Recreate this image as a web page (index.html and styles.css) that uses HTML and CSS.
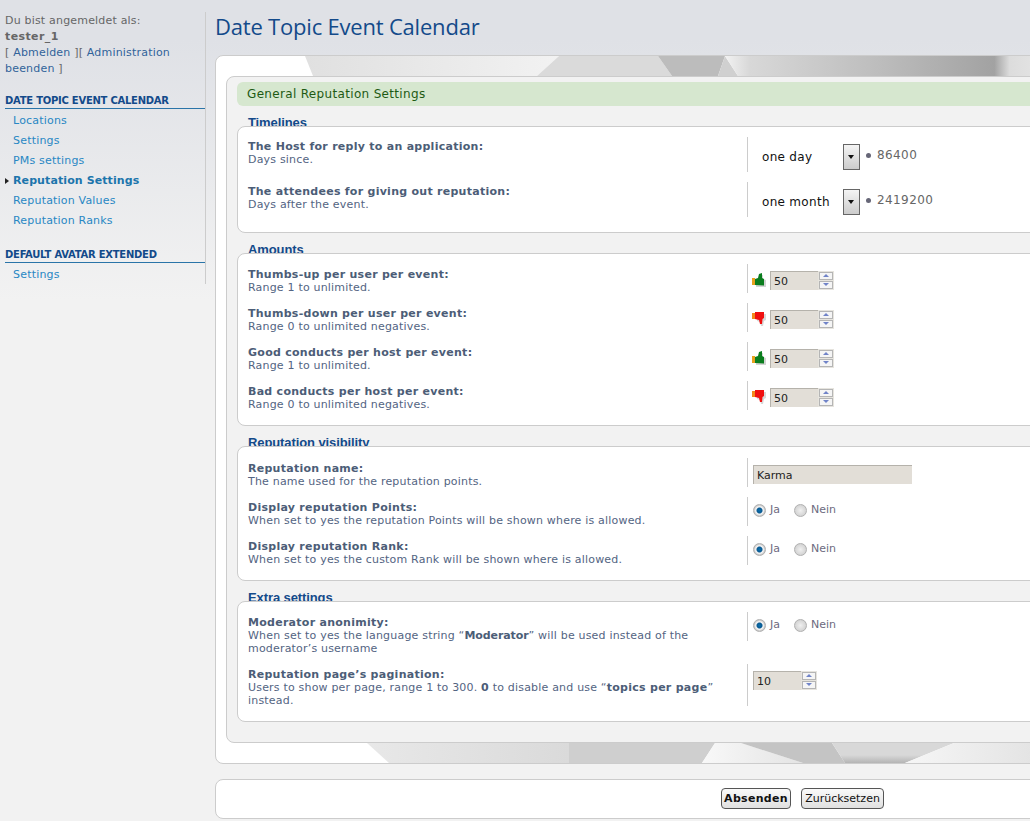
FILE: index.html
```html
<!DOCTYPE html>
<html lang="de">

<head>
    <meta charset="UTF-8">
    <title>Date Topic Event Calendar</title>
    <link rel="stylesheet" href="styles.css">
</head>

<body>
    <svg class="defs" width="0" height="0">
        <defs>
            <g id="thumb-up">
                <path d="M4 7 L7 6 L9 2 L11 2 L11 6 L14 7 L14 14 L4 14 Z" fill="#d4d4d4"/>
                <rect x="0" y="5" width="3" height="7" fill="#e6a21e"/>
                <path d="M3 6 L6 5 L7 1 L10 0 L10 5 L12 6 L12 12.500 L3 12 Z" fill="#0a7d1e"/>
            </g>
            <g id="thumb-down">
                <path d="M5 2 L14 2 L14 8 L12 9 L11 14 L9 14 L8 10 L5 9 Z" fill="#d8d8d8"/>
                <rect x="0" y="1" width="4" height="6" fill="#f28a1c"/>
                <path d="M3 0 L12 0 L12 6 L10.500 7 L10 12 L8 12 L7 8 L3 7 Z" fill="#f01010"/>
            </g>
            <linearGradient id="t1"><stop offset="0" stop-color="#e0e0e0"/><stop offset="1" stop-color="#f2f2f2"/></linearGradient>
            <linearGradient id="t4">
                <stop offset="0" stop-color="#f2f2f2"/>
                <stop offset="0.08" stop-color="#d8d8d8"/>
                <stop offset="0.5" stop-color="#bdbdbd"/>
                <stop offset="0.88" stop-color="#a2a2a2"/>
                <stop offset="0.93" stop-color="#dcdcdc"/>
                <stop offset="1" stop-color="#e2e2e2"/>
            </linearGradient>
            <linearGradient id="b1"><stop offset="0" stop-color="#e8e8e8"/><stop offset="1" stop-color="#dadada"/></linearGradient>
            <linearGradient id="b3"><stop offset="0" stop-color="#f8f8f8"/><stop offset="1" stop-color="#e4e4e4"/></linearGradient>
            <linearGradient id="b6"><stop offset="0" stop-color="#f6f6f6"/><stop offset="1" stop-color="#e4e4e4"/></linearGradient>
            <linearGradient id="b5" x1="0" y1="0" x2="0" y2="1"><stop offset="0.6" stop-color="#d8d8d8"/><stop offset="1" stop-color="#b4b4b4"/></linearGradient>
        </defs>
    </svg>

    <aside class="sidebar">
        <p class="login">Du bist angemeldet als:<br><b>tester_1</b><br>[ <a href="#">Abmelden</a> ][ <a href="#">Administration beenden</a> ]</p>
        <h3 class="menu-head">Date Topic Event Calendar</h3>
        <ul class="menu">
            <li>Locations</li>
            <li>Settings</li>
            <li>PMs settings</li>
            <li class="active">Reputation Settings</li>
            <li>Reputation Values</li>
            <li>Reputation Ranks</li>
        </ul>
        <h3 class="menu-head">Default Avatar Extended</h3>
        <ul class="menu">
            <li>Settings</li>
        </ul>
    </aside>

    <main class="main">
        <h1 class="title">Date Topic Event Calendar</h1>

        <div class="outer">
            <svg class="strip strip-top" width="815" height="20">
                <polygon points="89,0 343,0 321,20 97,20" fill="url(#t1)"/>
                <polygon points="343,0 442,0 456,20 321,20" fill="#dadada"/>
                <polygon points="442,0 509,0 502,20 456,20" fill="#bcbcbc"/>
                <polygon points="509,0 522,20 502,20" fill="#d0d0d0"/>
                <polygon points="509,0 815,0 815,20 522,20" fill="url(#t4)"/>
            </svg>
            <svg class="strip strip-bottom" width="815" height="20">
                <polygon points="151,0 353,0 353,20 173,20" fill="url(#b1)"/>
                <polygon points="353,0 499,0 486,20 353,20" fill="#cfcfcf"/>
                <polygon points="499,0 525,0 587,20 486,20" fill="url(#b3)"/>
                <polygon points="525,0 616,0 629,20 587,20" fill="#c4c4c4"/>
                <polygon points="616,0 738,0 689,20 629,20" fill="url(#b5)"/>
                <polygon points="738,0 815,0 815,20 689,20" fill="url(#b6)"/>
            </svg>
            <div class="inner">
                <h2 class="green">General Reputation Settings</h2>

                <h4 class="legend">Timelines</h4>
                <section class="box box-time">
                    <div class="row row-45">
                        <div class="lbl"><b>The Host for reply to an application:</b><br>Days since.</div>
                        <div class="ctl ctl-select"><span class="sel">one day</span><span class="arrow"></span><span class="val">86400</span></div>
                    </div>
                    <div class="row row-45">
                        <div class="lbl"><b>The attendees for giving out reputation:</b><br>Days after the event.</div>
                        <div class="ctl ctl-select"><span class="sel">one month</span><span class="arrow"></span><span class="val">2419200</span></div>
                    </div>
                </section>

                <h4 class="legend">Amounts</h4>
                <section class="box box-amounts">
                    <div class="row row-39">
                        <div class="lbl"><b>Thumbs-up per user per event:</b><br>Range 1 to unlimited.</div>
                        <div class="ctl ctl-num"><svg class="thumb" width="15" height="15"><use href="#thumb-up"/></svg><span class="num">50</span><span class="spin"><i class="up"></i><i class="down"></i></span></div>
                    </div>
                    <div class="row row-39">
                        <div class="lbl"><b>Thumbs-down per user per event:</b><br>Range 0 to unlimited negatives.</div>
                        <div class="ctl ctl-num"><svg class="thumb" width="15" height="15"><use href="#thumb-down"/></svg><span class="num">50</span><span class="spin"><i class="up"></i><i class="down"></i></span></div>
                    </div>
                    <div class="row row-39">
                        <div class="lbl"><b>Good conducts per host per event:</b><br>Range 1 to unlimited.</div>
                        <div class="ctl ctl-num"><svg class="thumb" width="15" height="15"><use href="#thumb-up"/></svg><span class="num">50</span><span class="spin"><i class="up"></i><i class="down"></i></span></div>
                    </div>
                    <div class="row row-39">
                        <div class="lbl"><b>Bad conducts per host per event:</b><br>Range 0 to unlimited negatives.</div>
                        <div class="ctl ctl-num"><svg class="thumb" width="15" height="15"><use href="#thumb-down"/></svg><span class="num">50</span><span class="spin"><i class="up"></i><i class="down"></i></span></div>
                    </div>
                </section>

                <h4 class="legend">Reputation visibility</h4>
                <section class="box box-vis">
                    <div class="row row-39">
                        <div class="lbl"><b>Reputation name:</b><br>The name used for the reputation points.</div>
                        <div class="ctl ctl-text"><span class="text-input">Karma</span></div>
                    </div>
                    <div class="row row-39">
                        <div class="lbl"><b>Display reputation Points:</b><br>When set to yes the reputation Points will be shown where is allowed.</div>
                        <div class="ctl ctl-radio"><i class="radio on"></i><span class="opt">Ja</span><i class="radio"></i><span class="opt">Nein</span></div>
                    </div>
                    <div class="row row-39">
                        <div class="lbl"><b>Display reputation Rank:</b><br>When set to yes the custom Rank will be shown where is allowed.</div>
                        <div class="ctl ctl-radio"><i class="radio on"></i><span class="opt">Ja</span><i class="radio"></i><span class="opt">Nein</span></div>
                    </div>
                </section>

                <h4 class="legend">Extra settings</h4>
                <section class="box box-extra">
                    <div class="row row-52">
                        <div class="lbl"><b>Moderator anonimity:</b><br>When set to yes the language string “<b class="tight">Moderator</b>” will be used instead of the moderator’s username</div>
                        <div class="ctl ctl-radio"><i class="radio on"></i><span class="opt">Ja</span><i class="radio"></i><span class="opt">Nein</span></div>
                    </div>
                    <div class="row row-52">
                        <div class="lbl"><b>Reputation page’s pagination:</b><br>Users to show per page, range 1 to 300. <b>0</b> to disable and use “<b>topics per page</b>” instead.</div>
                        <div class="ctl ctl-page"><span class="num">10</span><span class="spin"><i class="up"></i><i class="down"></i></span></div>
                    </div>
                </section>
            </div>
        </div>

        <div class="buttons">
            <button class="btn btn-main">Absenden</button>
            <button class="btn btn-reset">Zurücksetzen</button>
        </div>
    </main>
</body>

</html>
```

FILE: styles.css
```css
* {
    padding: 0;
    margin: 0;
    box-sizing: border-box;
}

html,
body {
    height: 821px;
    overflow: hidden;
}

body {
    display: flex;
    align-items: flex-start;
    background: linear-gradient(#dfe1e6 0, #dfe1e6 40px, #f2f2f2 300px);
    font-family: "DejaVu Sans", sans-serif;
    font-size: 11px;
    line-height: 13px;
    letter-spacing: 0.19px;
    color: #555;
}

b {
    letter-spacing: 0.27px;
}

b.tight {
    letter-spacing: -0.1px;
}

.defs {
    position: absolute;
}

a {
    color: #31639a;
    text-decoration: none;
}

/* sidebar */
.sidebar {
    flex: none;
    width: 206px;
    margin-top: 12px;
    height: 272px;
    border-right: 1px solid #ccc;
    padding-left: 5px;
}

.login {
    line-height: 16px;
    margin-top: 1px;
    height: 71px;
    color: #666;
}

.login b {
    letter-spacing: 0.4px;
}

.menu-head {
    font-size: 10px;
    line-height: 13px;
    letter-spacing: -0.25px;
    text-transform: uppercase;
    color: #134a8a;
    border-bottom: 1px solid #2a74a8;
    padding-bottom: 1px;
    margin-top: 10px;
}

.menu {
    list-style: none;
    padding-top: 2px;
    margin-bottom: 17px;
}

.menu li {
    height: 20px;
    line-height: 20px;
    padding-left: 8px;
    color: #2887c4;
}

.menu li.active {
    position: relative;
    font-weight: bold;
    letter-spacing: 0.1px;
    color: #1c75ac;
}

.menu li.active::before {
    content: "";
    position: absolute;
    left: 0;
    top: 7px;
    border-left: 4px solid #222;
    border-top: 3px solid transparent;
    border-bottom: 3px solid transparent;
}

/* main column */
.main {
    flex: none;
    width: 900px;
    margin-left: 9px;
}

.title {
    font-family: "Open Sans", sans-serif;
    font-weight: normal;
    font-size: 22px;
    line-height: 30px;
    letter-spacing: -0.2px;
    color: #134a8a;
    margin-top: 11px;
    height: 44px;
}

.outer {
    position: relative;
    height: 709px;
    padding: 20px 10px;
    border: 1px solid #ccc;
    border-radius: 8px;
    background: #fff;
}

.strip {
    position: absolute;
    left: 0;
}

.strip-top {
    top: 0;
}

.strip-bottom {
    bottom: 0;
}

.inner {
    position: relative;
    height: 667px;
    padding: 5px 10px;
    border: 1px solid #ccc;
    border-radius: 8px;
    background: #f2f2f2;
}

.green {
    font-size: 12px;
    font-weight: normal;
    line-height: 25px;
    letter-spacing: 0.33px;
    height: 24px;
    padding-left: 10px;
    color: #1e5a14;
    background: #d6e7cf;
    border-radius: 6px 0 0 6px;
}

.legend {
    font-family: "Liberation Sans", sans-serif;
    font-size: 13px;
    line-height: 16px;
    letter-spacing: -0.1px;
    font-weight: bold;
    color: #134a8a;
    padding-left: 11px;
    margin-top: 9px;
    height: 11px;
}

.box {
    position: relative;
    background: #fff;
    border: 1px solid #ccc;
    border-radius: 8px;
    padding: 10px 10px 0;
}

.box-time {
    height: 107px;
}

.box-amounts {
    height: 173px;
}

.box-vis {
    height: 135px;
    padding-top: 11px;
}

.box-extra {
    height: 121px;
}

.row {
    display: flex;
}

.row-45 {
    height: 45px;
}

.row-39 {
    height: 39px;
}

.row-52 {
    height: 52px;
}

.lbl {
    width: 499px;
    flex: none;
    color: #536482;
    padding-top: 3px;
}

.box-amounts .lbl,
.box-vis .lbl,
.box-extra .lbl {
    padding-top: 4px;
}

.lbl b {
    color: #4c5d77;
}

.ctl {
    display: flex;
    align-items: flex-start;
    border-left: 1px solid #ccc;
    height: 35px;
    padding-left: 5px;
    letter-spacing: 0;
}

.ctl-num,
.ctl-text,
.ctl-radio {
    height: 29px;
}

.ctl-page {
    height: 42px;
}

/* select */
.sel {
    width: 90px;
    padding: 13px 0 0 9px;
    font-size: 12px;
    line-height: 15px;
    letter-spacing: 0.3px;
    color: #111;
}

.arrow {
    position: relative;
    width: 17px;
    height: 26px;
    margin-top: 7px;
    border: 1px solid #666;
    background: linear-gradient(#f4f4f4, #ccc);
}

.arrow::after {
    content: "";
    position: absolute;
    left: 4px;
    top: 10px;
    border-top: 4px solid #111;
    border-left: 3px solid transparent;
    border-right: 3px solid transparent;
}

.val {
    margin: 12px 0 0 6px;
    font-size: 12px;
    letter-spacing: 0.4px;
    color: #666;
}

.val::before {
    content: "";
    display: inline-block;
    width: 5px;
    height: 5px;
    margin-right: 6px;
    vertical-align: 1px;
    border-radius: 50%;
    background: #667;
}

/* number inputs */
.thumb {
    margin: 9px 3px 0 -1px;
}

.num {
    width: 48px;
    height: 19px;
    margin-top: 7px;
    padding: 3px 0 0 3px;
    color: #222;
    background: #e2ded7;
    border-top: 1px solid #b5b2ab;
    border-left: 1px solid #b5b2ab;
}

.spin {
    display: flex;
    flex-direction: column;
    gap: 1px;
    width: 16px;
    height: 19px;
    margin-top: 7px;
    padding: 1px;
    background: #e6e4de;
}

.spin i {
    position: relative;
    flex: 1;
    background: #f5f5f5;
    border: 1px solid #b5b5b5;
}

.spin i::after {
    content: "";
    position: absolute;
    left: 3px;
    top: 1px;
    border-left: 3px solid transparent;
    border-right: 3px solid transparent;
}

.spin .up::after {
    border-bottom: 3px solid #7083c8;
}

.spin .down::after {
    border-top: 3px solid #7083c8;
}

/* text input */
.text-input {
    width: 159px;
    height: 19px;
    margin-top: 7px;
    padding: 3px 0 0 3px;
    color: #222;
    background: #e2ded7;
    border-top: 1px solid #b5b2ab;
    border-left: 1px solid #b5b2ab;
}

/* radios */
.radio {
    width: 13px;
    height: 13px;
    margin-top: 7px;
    border: 1px solid #b0b0b0;
    border-radius: 50%;
    background: radial-gradient(#f0f0f0, #c8c8c8);
}

.radio.on {
    background: radial-gradient(#0b6fae 0, #0a5a92 2.5px, #f4f4f4 3.5px, #f0f0f0 4px, #c4c4c4 5.5px);
}

.opt {
    margin: 6px 14px 0 4px;
    color: #6d6a80;
}

/* footer buttons */
.buttons {
    display: flex;
    gap: 10px;
    height: 40px;
    margin-top: 15px;
    padding: 8px 0 0 505px;
    background: #fff;
    border: 1px solid #ccc;
    border-radius: 8px;
}

.btn {
    width: 70px;
    height: 21px;
    font-family: "DejaVu Sans", sans-serif;
    font-size: 11px;
    color: #111;
    background: linear-gradient(#fafafa, #e0e0e0);
    border: 1px solid #555;
    border-radius: 4px;
}

.btn-reset {
    width: 83px;
}

.btn-main {
    font-weight: bold;
    letter-spacing: 0.3px;
}
```
